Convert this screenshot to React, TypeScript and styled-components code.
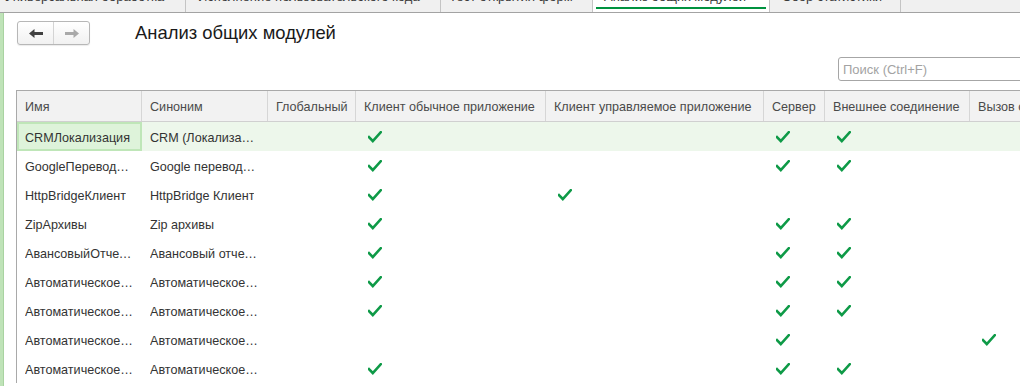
import React from 'react';
import styled, { createGlobalStyle } from 'styled-components';

const GlobalStyle = createGlobalStyle`
    html, body {
        margin: 0;
        padding: 0;
        overflow: hidden;
        background: #ffffff;
    }
    body {
        font-family: 'Liberation Sans', Arial, sans-serif;
        font-size: 12.6px;
        color: #333333;
    }
`;

const COLS = '125px 126px 88px 190px 218px 61px 145px 160px';

const Page = styled.div`
    width: 100vw;
    height: 386px;
    overflow: hidden;
    display: flex;
    flex-direction: column;
`;

const TabBar = styled.div`
    display: flex;
    height: 12px;
    background: #f0f0f0;
    border-bottom: 1px solid #a3a3a3;
    flex-shrink: 0;
`;

const Tab = styled.div<{ $width: number; $active?: boolean; $pad?: number }>`
    position: relative;
    width: ${({ $width }) => $width}px;
    flex-shrink: 0;
    height: 12px;
    overflow: hidden;
    box-sizing: border-box;
    padding-left: ${({ $pad }) => $pad ?? 12}px;
    border-right: 1px solid #c4c4c4;
    background: ${({ $active }) => ($active ? '#ffffff' : 'transparent')};
    white-space: nowrap;
    color: #3a3a3a;
    font-size: 13px;
    line-height: 15px;

    span {
        display: block;
        margin-top: -11px;
    }

    ${({ $active }) =>
        $active &&
        `
        &::after {
            content: '';
            position: absolute;
            left: 3px;
            right: 3px;
            top: 7px;
            height: 2px;
            background: #00923f;
        }
    `}
`;

const Body = styled.div`
    display: flex;
    flex: 1;
    min-height: 0;
`;

const SideStrip = styled.div`
    width: 3px;
    flex-shrink: 0;
    background: #bfe3b8;
    border-right: 1px solid #a9d3a1;
`;

const Main = styled.div`
    flex: 1;
    min-width: 0;
    display: flex;
    flex-direction: column;
    padding-top: 8px;
`;

const Toolbar = styled.div`
    display: flex;
    align-items: center;
    padding-left: 13px;
    height: 24px;
`;

const NavGroup = styled.div`
    display: flex;
    height: 24px;
    box-sizing: border-box;
    border: 1px solid #b7b7b7;
    border-radius: 3px;
    background: linear-gradient(#ffffff, #f1f1f1);
    box-shadow: 0 1px 1px rgba(0, 0, 0, 0.08);
`;

const NavButton = styled.div<{ $divider?: boolean }>`
    width: 35px;
    display: flex;
    align-items: center;
    justify-content: center;
    border-left: ${({ $divider }) => ($divider ? '1px solid #d4d4d4' : 'none')};
`;

const Title = styled.div`
    margin-left: 45px;
    font-size: 18.4px;
    line-height: 20px;
    color: #1a1a1a;
`;

const SearchRow = styled.div`
    display: flex;
    padding-left: 834px;
    margin-top: 12px;
`;

const SearchInput = styled.div`
    width: 200px;
    flex-shrink: 0;
    height: 24px;
    box-sizing: border-box;
    border: 1px solid #a6a6a6;
    border-radius: 3px;
    padding-left: 4px;
    display: flex;
    align-items: center;
    color: #a3a3a3;
    font-size: 13px;
`;

const Table = styled.div`
    margin-top: 9px;
    margin-left: 12px;
    border-left: 1px solid #a9a9a9;
    width: 1200px;
`;

const HeaderRow = styled.div`
    display: grid;
    grid-template-columns: ${COLS};
    height: 32px;
    box-sizing: border-box;
    background: #f2f2f2;
    border-top: 1px solid #a9a9a9;
    border-bottom: 1px solid #d0d0d0;
`;

const HeaderCell = styled.div`
    display: flex;
    align-items: center;
    padding-left: 8px;
    padding-top: 1px;
    border-right: 1px solid #d6d6d6;
    color: #4a4a4a;
    white-space: nowrap;
    overflow: hidden;
`;

const Row = styled.div<{ $selected?: boolean }>`
    display: grid;
    grid-template-columns: ${COLS};
    height: 29px;
    background: ${({ $selected }) => ($selected ? '#edf7eb' : '#ffffff')};
`;

const Cell = styled.div<{ $focused?: boolean }>`
    display: flex;
    align-items: center;
    padding-right: 8px;
    padding-top: 2px;
    padding-left: ${({ $focused }) => ($focused ? '6px' : '8px')};
    min-width: 0;
    box-sizing: border-box;
    color: #333333;
    background: ${({ $focused }) => ($focused ? '#def3da' : 'transparent')};
    border: ${({ $focused }) => ($focused ? '2px solid #bfe6b8' : 'none')};

    span {
        overflow: hidden;
        text-overflow: ellipsis;
        white-space: nowrap;
    }
`;

const CheckCell = styled.div`
    display: flex;
    align-items: center;
    padding-left: 12px;
    padding-top: 1px;
`;

const ArrowLeft: React.FC<{ color: string }> = ({ color }) => (
    <svg width="14" height="9" viewBox="0 0 14 9">
        <polygon points="0,4.5 5.5,0 5.5,9" fill={color} />
        <rect x="5" y="3" width="9" height="3" fill={color} />
    </svg>
);

const ArrowRight: React.FC<{ color: string }> = ({ color }) => (
    <svg width="14" height="9" viewBox="0 0 14 9">
        <polygon points="14,4.5 8.5,0 8.5,9" fill={color} />
        <rect x="0" y="3" width="9" height="3" fill={color} />
    </svg>
);

const Check: React.FC = () => (
    <svg width="14" height="12" viewBox="0 0 14 12">
        <polyline
            points="1,6.2 4.8,10 12.8,1.2"
            fill="none"
            stroke="#0e9a47"
            strokeWidth="2.6"
            strokeLinecap="square"
            strokeLinejoin="miter"
        />
    </svg>
);

const headers = [
    'Имя',
    'Синоним',
    'Глобальный',
    'Клиент обычное приложение',
    'Клиент управляемое приложение',
    'Сервер',
    'Внешнее соединение',
    'Вызов сервера',
];

type ModuleRow = {
    name: string;
    synonym: string;
    flags: [boolean, boolean, boolean, boolean, boolean, boolean];
};

const auto = 'АвтоматическоеЗаполнениеДокументов';
const autoSyn = 'Автоматическое заполнение';

const rows: ModuleRow[] = [
    { name: 'CRMЛокализация', synonym: 'CRM (Локализация)', flags: [false, true, false, true, true, false] },
    { name: 'GoogleПереводчикКлиент', synonym: 'Google переводчик (клиент)', flags: [false, true, false, true, true, false] },
    { name: 'HttpBridgeКлиент', synonym: 'HttpBridge Клиент', flags: [false, true, true, false, false, false] },
    { name: 'ZipАрхивы', synonym: 'Zip архивы', flags: [false, true, false, true, true, false] },
    { name: 'АвансовыйОтчетСервер', synonym: 'Авансовый отчет (сервер)', flags: [false, true, false, true, true, false] },
    { name: auto, synonym: autoSyn, flags: [false, true, false, true, true, false] },
    { name: auto + 'Клиент', synonym: autoSyn + ' клиент', flags: [false, true, false, true, true, false] },
    { name: auto + 'Вызов', synonym: autoSyn + ' вызов', flags: [false, false, false, true, false, true] },
    { name: auto + 'Сервер', synonym: autoSyn + ' сервер', flags: [false, true, false, true, true, false] },
];

const tabs = [
    { title: 'Универсальная обработка', width: 186, pad: 5 },
    { title: 'Исполнение пользовательского кода', width: 255 },
    { title: 'Тест открытия форм', width: 152, pad: 8 },
    { title: 'Анализ общих модулей', width: 177, active: true, pad: 11 },
    { title: 'Сбор статистики', width: 131 },
];

const App: React.FC = () => (
    <Page>
        <GlobalStyle />
        <TabBar>
            {tabs.map((t) => (
                <Tab key={t.title} $width={t.width} $active={t.active} $pad={t.pad}>
                    <span>{t.title}</span>
                </Tab>
            ))}
        </TabBar>
        <Body>
            <SideStrip />
            <Main>
                <Toolbar>
                    <NavGroup>
                        <NavButton>
                            <ArrowLeft color="#414141" />
                        </NavButton>
                        <NavButton $divider>
                            <ArrowRight color="#a9a9a9" />
                        </NavButton>
                    </NavGroup>
                    <Title>Анализ общих модулей</Title>
                </Toolbar>
                <SearchRow>
                    <SearchInput>Поиск (Ctrl+F)</SearchInput>
                </SearchRow>
                <Table>
                    <HeaderRow>
                        {headers.map((h) => (
                            <HeaderCell key={h}>{h}</HeaderCell>
                        ))}
                    </HeaderRow>
                    {rows.map((r, i) => (
                        <Row key={r.name} $selected={i === 0}>
                            <Cell $focused={i === 0}>
                                <span>{r.name}</span>
                            </Cell>
                            <Cell>
                                <span>{r.synonym}</span>
                            </Cell>
                            {r.flags.map((f, j) => (
                                <CheckCell key={j}>{f && <Check />}</CheckCell>
                            ))}
                        </Row>
                    ))}
                </Table>
            </Main>
        </Body>
    </Page>
);

export default App;
